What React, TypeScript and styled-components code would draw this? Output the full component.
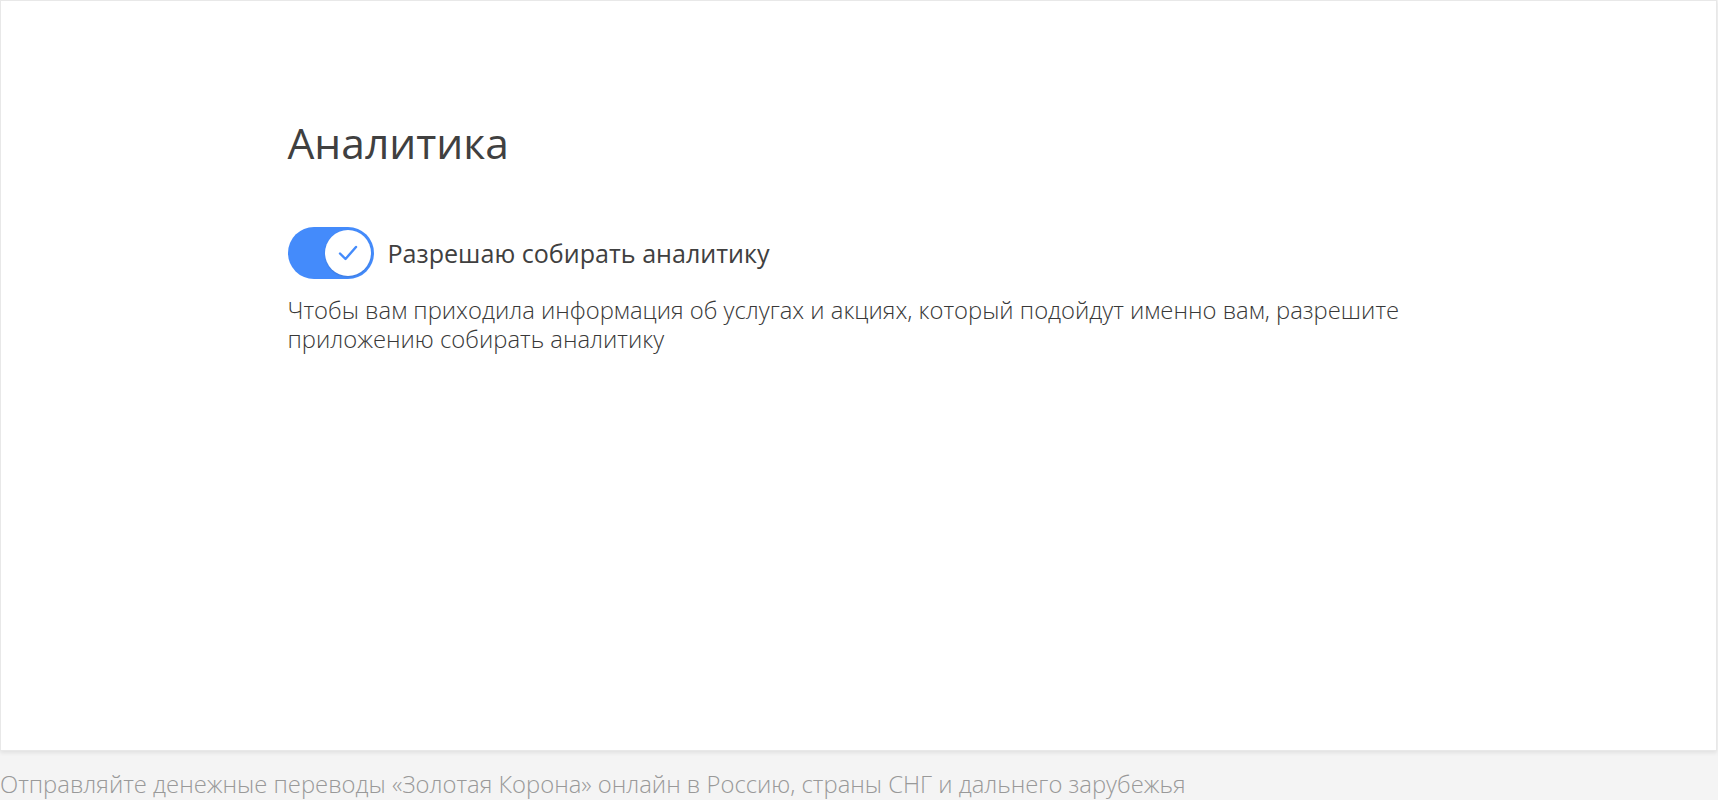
import React from "react";
import styled, { createGlobalStyle } from "styled-components";

const GlobalStyle = createGlobalStyle`
  html, body {
    margin: 0;
    padding: 0;
    background: #f4f4f4;
    font-family: "Open Sans", "Noto Sans", sans-serif;
  }
`;

const Card = styled.main`
  box-sizing: border-box;
  height: 751px;
  margin-right: 1px;
  background: #ffffff;
  border: 1px solid #e8e8e8;
  box-shadow: rgba(0, 0, 0, 0.08) 0 2px 4px;
`;

const Content = styled.section`
  width: 1142px;
  margin: 0 auto;
  padding-top: 112px;
`;

const Title = styled.h1`
  margin: 0 0 54px;
  font-size: 42.5px;
  font-weight: 400;
  line-height: 60px;
  color: #404040;
`;

const ToggleRow = styled.label`
  display: flex;
  align-items: center;
  gap: 14px;
  cursor: pointer;
`;

const Track = styled.span<{ $on: boolean }>`
  box-sizing: border-box;
  display: flex;
  justify-content: ${(p) => (p.$on ? "flex-end" : "flex-start")};
  align-items: center;
  width: 86px;
  height: 52px;
  padding: 3px;
  border-radius: 26px;
  background: ${(p) => (p.$on ? "#448bfb" : "#d6d6d6")};
`;

const Knob = styled.span`
  display: flex;
  align-items: center;
  justify-content: center;
  width: 46px;
  height: 46px;
  border-radius: 50%;
  background: #ffffff;
  box-shadow: rgba(0, 0, 0, 0.12) 0 1px 2px;
`;

const Label = styled.span`
  font-size: 25.1px;
  font-weight: 500;
  color: #404040;
`;

const Description = styled.p`
  margin: 17px 0 0;
  font-size: 23.8px;
  font-weight: 300;
  line-height: 28.5px;
  color: #383838;
`;

const Footer = styled.footer`
  padding: 18px 0 0;
  font-size: 23.8px;
  font-weight: 300;
  line-height: 30px;
  color: #999999;
`;

const Toggle = ({ on }: { on: boolean }) => (
  <Track $on={on}>
    <Knob>
      <svg width="20" height="16" viewBox="0 0 20 16" fill="none">
        <path
          d="M2 8.5L7.5 14L18 2"
          stroke="#448bfb"
          strokeWidth="2.4"
          strokeLinecap="round"
          strokeLinejoin="round"
        />
      </svg>
    </Knob>
  </Track>
);

export default function App() {
  return (
    <>
      <GlobalStyle />
      <Card>
        <Content>
          <Title>Аналитика</Title>
          <ToggleRow>
            <Toggle on />
            <Label>Разрешаю собирать аналитику</Label>
          </ToggleRow>
          <Description>
            Чтобы вам приходила информация об услугах и акциях, который
            подойдут именно вам, разрешите приложению собирать аналитику
          </Description>
        </Content>
      </Card>
      <Footer>
        Отправляйте денежные переводы «Золотая Корона» онлайн в Россию, страны
        СНГ и дальнего зарубежья
      </Footer>
    </>
  );
}
